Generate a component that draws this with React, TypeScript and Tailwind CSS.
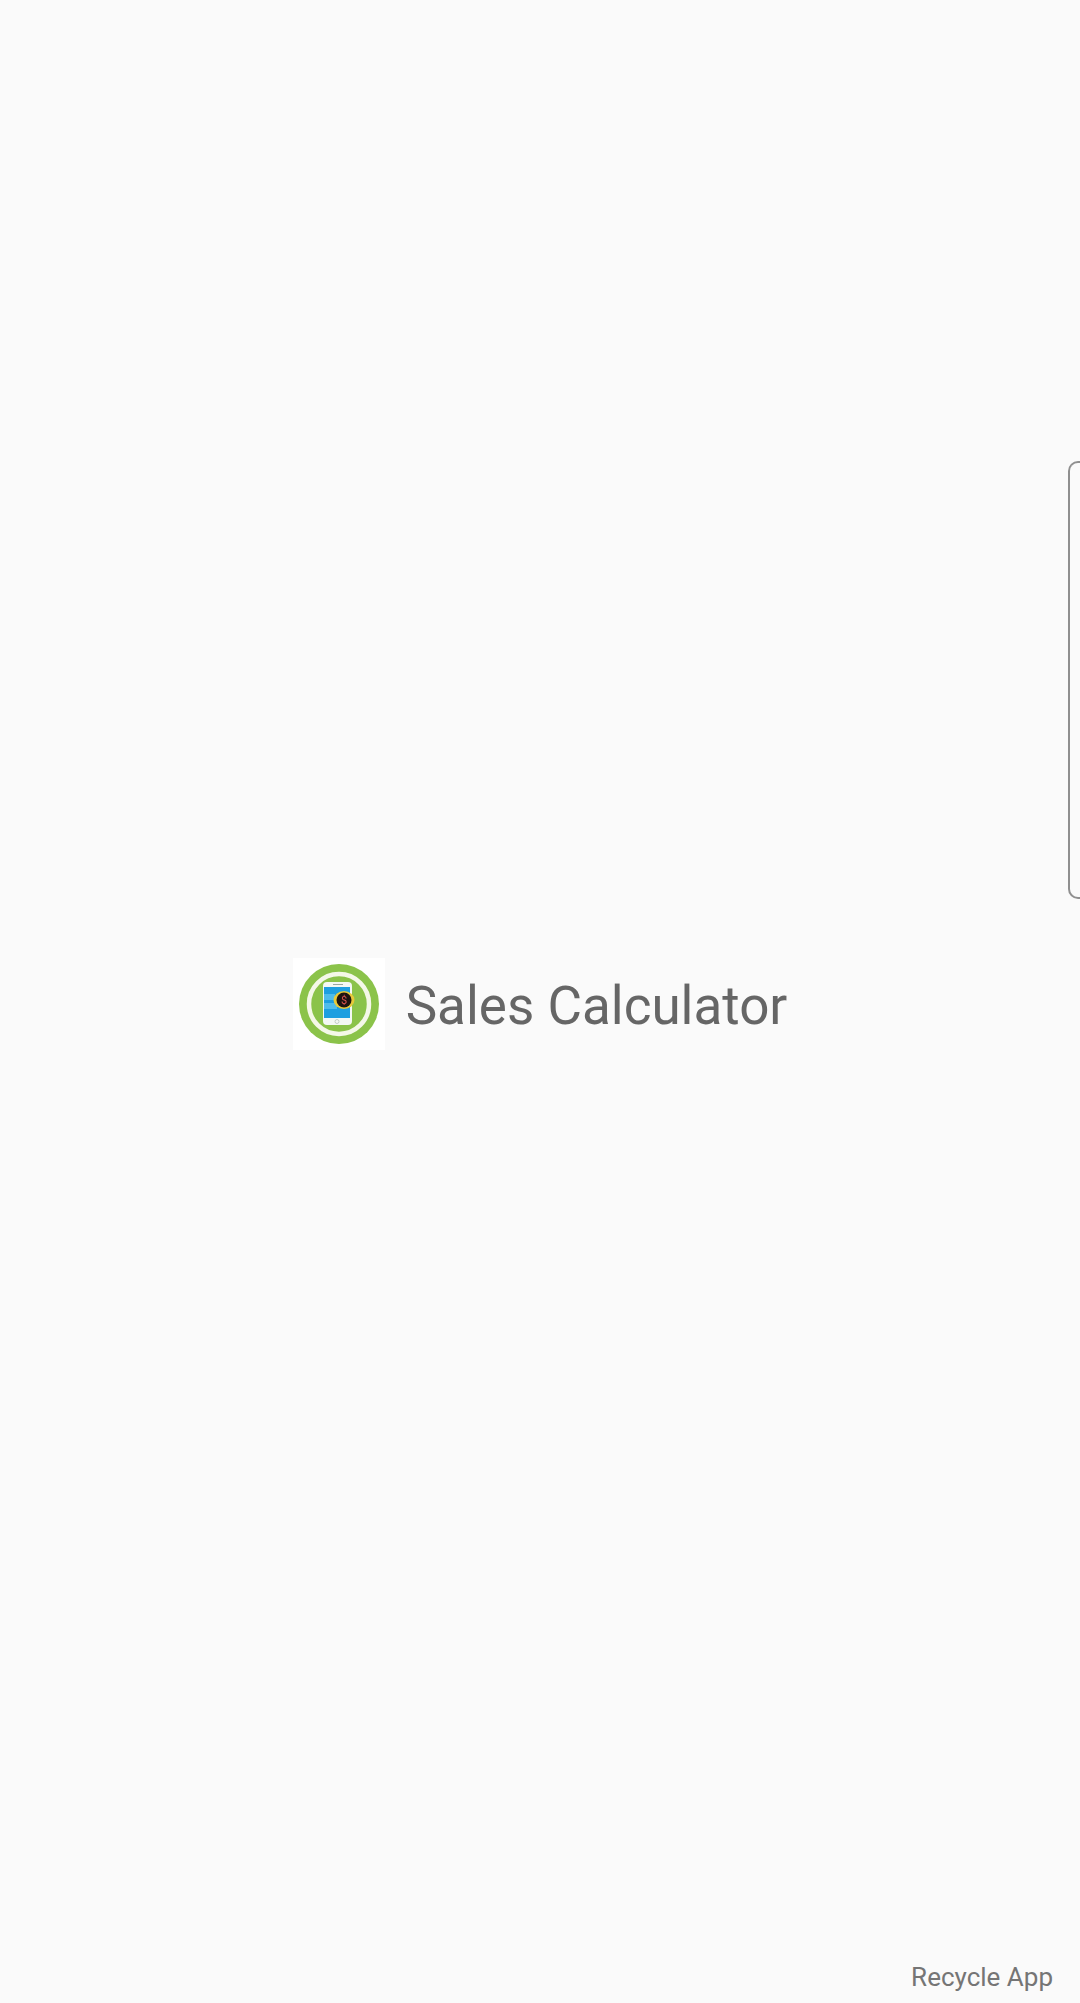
const AppLogo = () => (
    <svg width="92" height="92" viewBox="0 0 92 92" className="shrink-0 blur-[0.4px]">
        <rect width="92" height="92" fill="#ffffff" />
        <circle cx="46" cy="46" r="40" fill="#8bc34a" />
        <circle cx="46" cy="46" r="30" fill="none" stroke="#f4f8e8" strokeWidth="4.5" />
        <rect x="30" y="24" width="29" height="43" rx="4" fill="#f4f8f4" />
        <rect x="31" y="29" width="26" height="31" fill="#1e9fe0" />
        <rect x="31" y="36" width="11" height="6" fill="#4fbcea" />
        <rect x="31" y="45" width="13" height="6" fill="#4fbcea" />
        <rect x="40" y="26" width="10" height="1" fill="#9aa7a0" />
        <circle cx="44" cy="63.5" r="2" fill="none" stroke="#b8c4bc" strokeWidth="0.8" />
        <ellipse cx="51" cy="42" rx="10.5" ry="9" fill="#e8c93a" />
        <circle cx="51" cy="42" r="7.5" fill="#1d1410" />
        <text x="51" y="46" textAnchor="middle" fontSize="11" fontFamily="Roboto, sans-serif" fill="#d9534f">
            $
        </text>
    </svg>
);

const App = () => {
    return (
        <div className="relative h-screen overflow-hidden bg-[#fafafa] font-['Roboto',sans-serif]">
            <div className="flex h-full items-center justify-center gap-[21px] pt-[5px]">
                <AppLogo />
                <span className="mt-[5px] text-[53px] leading-none text-[#666666]">Sales Calculator</span>
            </div>
            {/* edge panel handle */}
            <div className="absolute right-0 top-[461px] h-[438px] w-[12px] rounded-l-[10px] border-y-2 border-l-2 border-[#8f8f8f]" />
            <span className="absolute bottom-[11px] right-[27px] text-[26px] leading-[30px] text-[#757575]">
                Recycle App
            </span>
        </div>
    );
};

export default App;
